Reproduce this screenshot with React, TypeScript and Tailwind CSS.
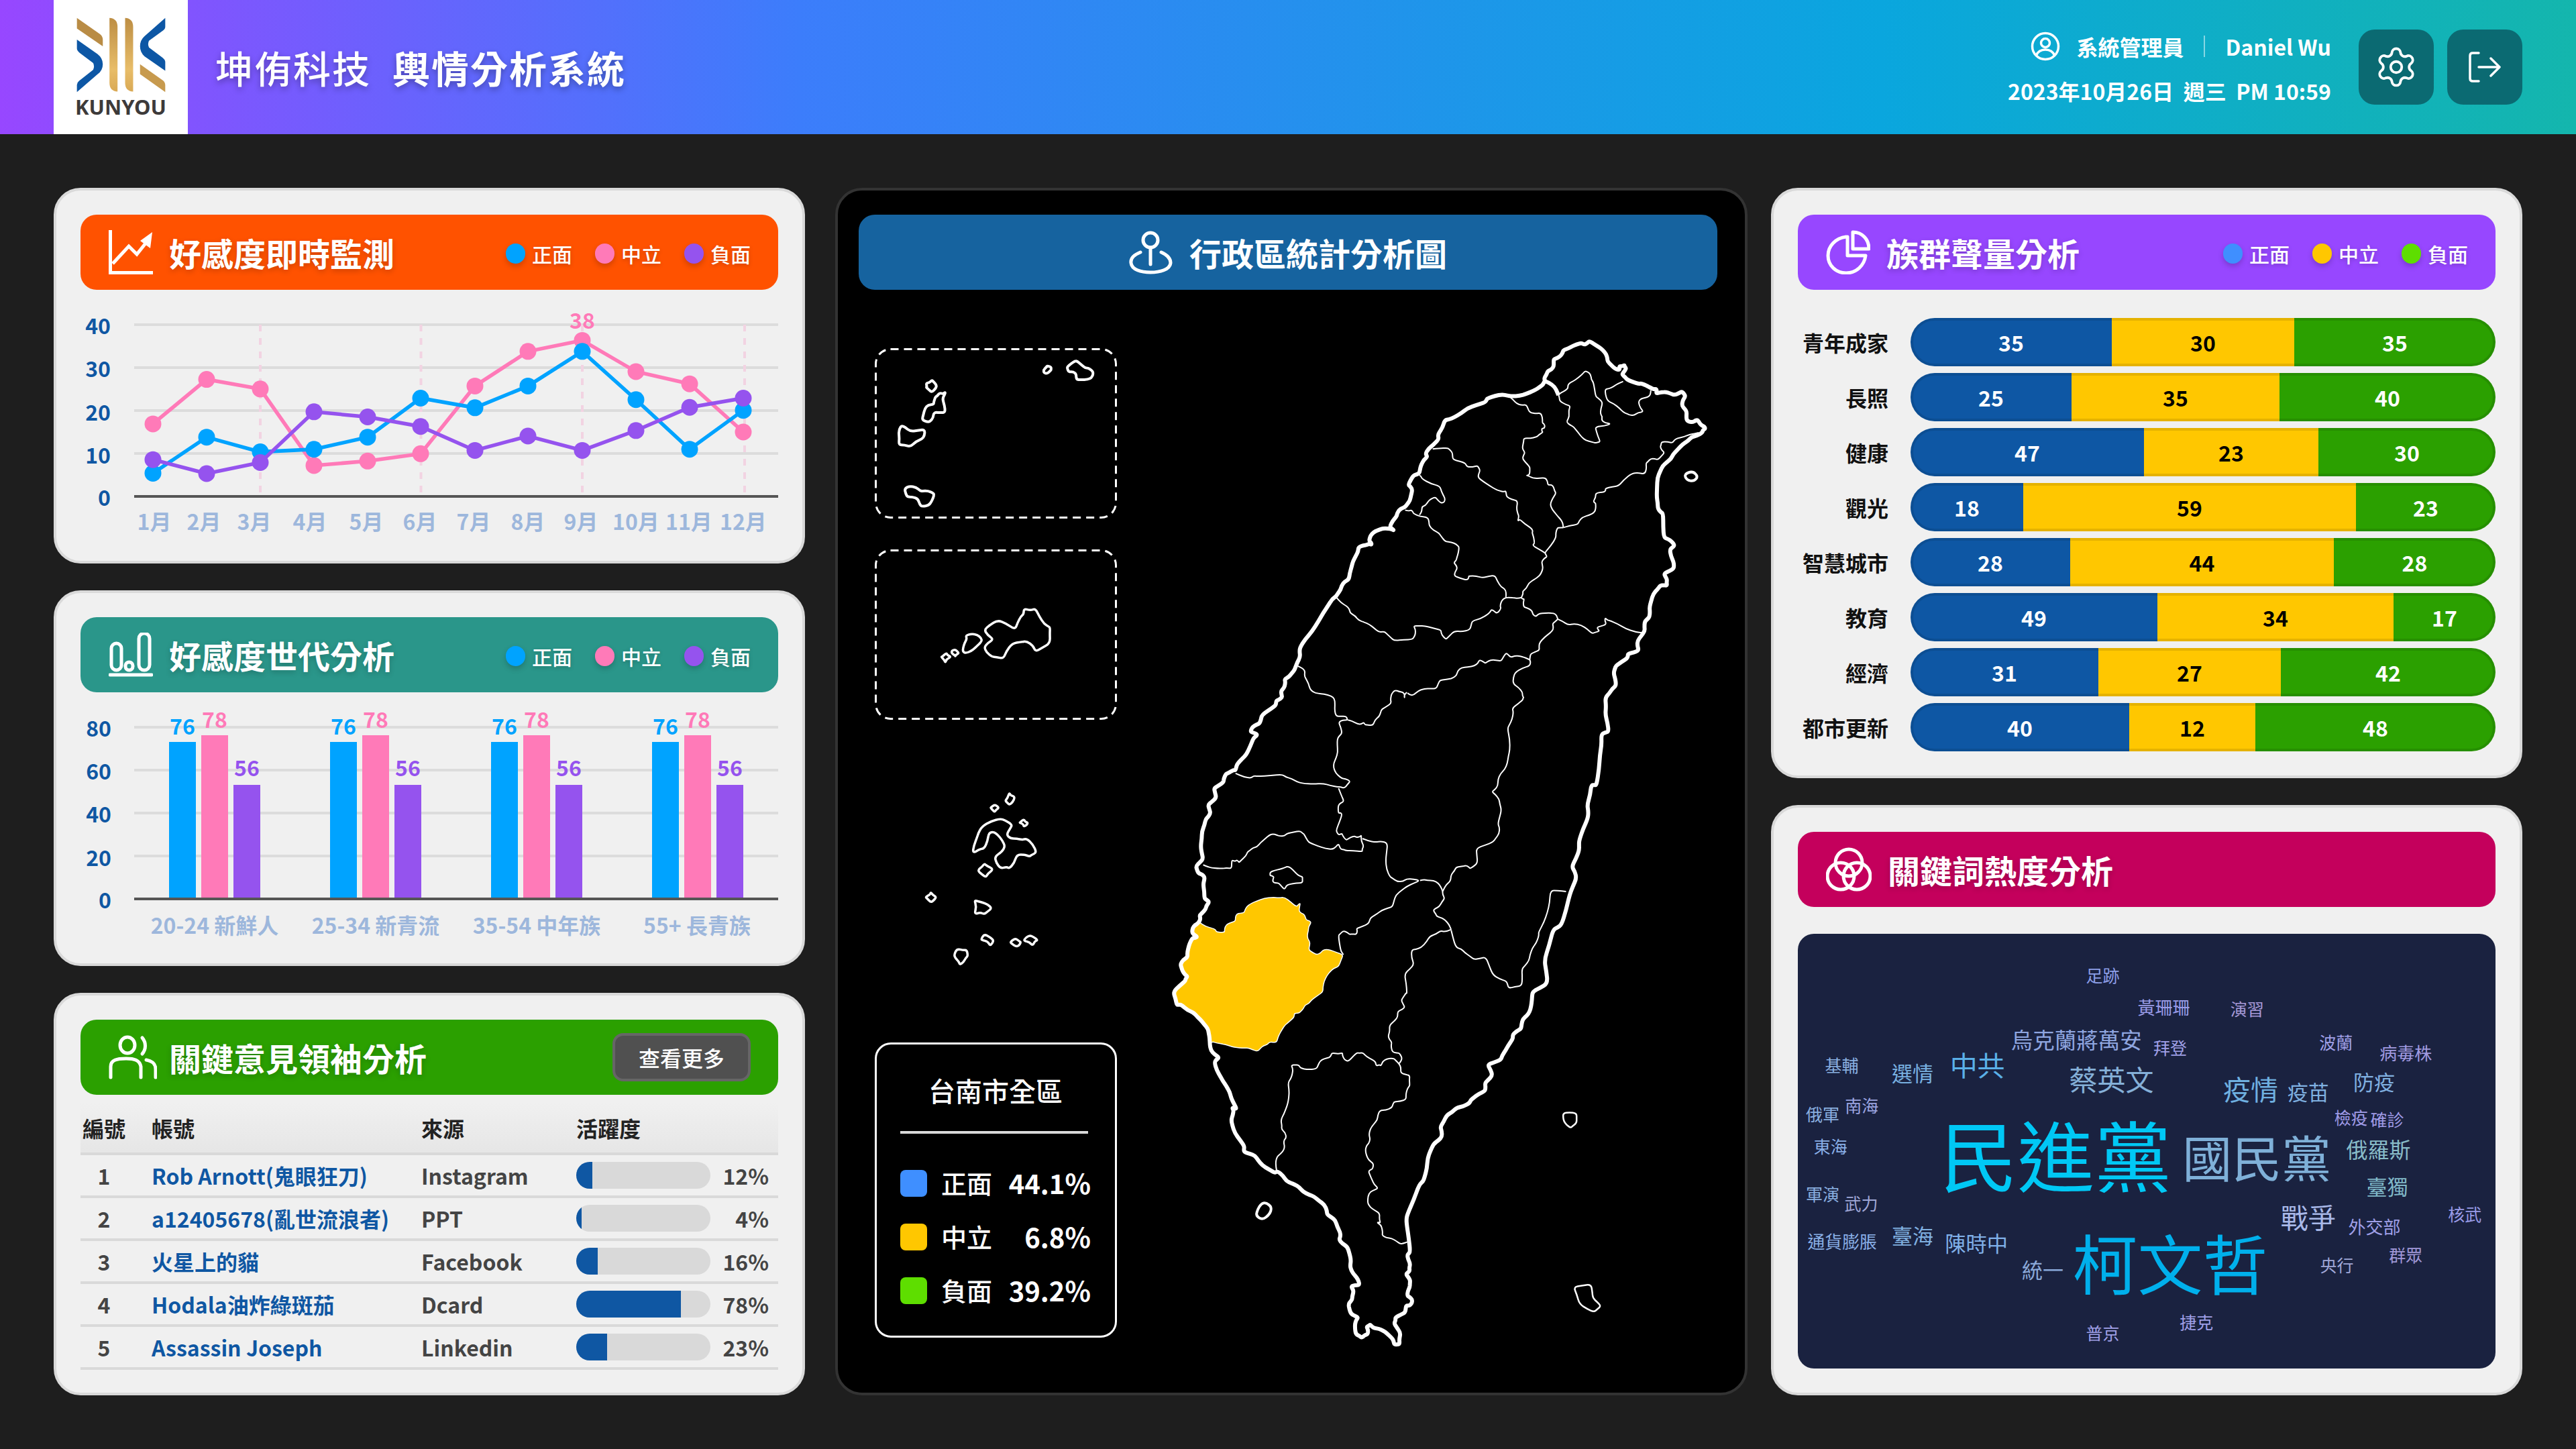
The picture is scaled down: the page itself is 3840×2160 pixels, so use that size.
import { Settings } from "lucide-react";
import type { ReactNode } from "react";

type Pts = number[][];

// map outlines are traced against the reference, so each block keeps its own origin and scale
const toPage = (ox: number, oy: number, sx: number, sy: number, pts: Pts): Pts =>
  pts.map(([x, y]) => [ox + x / sx, oy + y / sy]);
const z5 = (pts: Pts) => toPage(1240, 270, 1.153, 1.742, pts);
const z6 = (pts: Pts) => toPage(1240, 1170, 1.153, 1.686, pts);
const z9 = (pts: Pts) => toPage(2000, 480, 2.8, 2.8, pts);
const z10 = (pts: Pts) => toPage(1740, 1000, 2.8, 2.8, pts);
const z11 = (pts: Pts) => toPage(1780, 1480, 2.8, 2.8, pts);

// the real borders are ragged, so subdivide and nudge points by a hash of their position
function rough(p: Pts, amp: number, closed = false): Pts {
  const out: Pts = [];
  const nudge = (x: number, y: number) => {
    const h = Math.sin(x * 12.9898 + y * 78.233) * 43758.5453;
    const k = Math.sin(x * 39.346 + y * 11.135) * 24634.6345;
    return [x + (h - Math.floor(h) - 0.5) * amp * 2, y + (k - Math.floor(k) - 0.5) * amp * 2];
  };
  const n = closed ? p.length : p.length - 1;
  for (let i = 0; i < n; i++) {
    const a = p[i];
    const b = p[(i + 1) % p.length];
    out.push(a, nudge((a[0] + b[0]) / 2, (a[1] + b[1]) / 2));
  }
  if (!closed) out.push(p[p.length - 1]);
  return out;
}

function smooth(p: Pts, closed = false) {
  const mid = (a: number[], b: number[]) => [(a[0] + b[0]) / 2, (a[1] + b[1]) / 2];
  const f = (n: number) => n.toFixed(1);
  if (closed) {
    const s = mid(p[p.length - 1], p[0]);
    let d = `M${f(s[0])} ${f(s[1])}`;
    p.forEach((pt, i) => {
      const m = mid(pt, p[(i + 1) % p.length]);
      d += `Q${f(pt[0])} ${f(pt[1])} ${f(m[0])} ${f(m[1])}`;
    });
    return d + "Z";
  }
  let d = `M${f(p[0][0])} ${f(p[0][1])}`;
  for (let i = 1; i < p.length - 1; i++) {
    const m = mid(p[i], p[i + 1]);
    d += `Q${f(p[i][0])} ${f(p[i][1])} ${f(m[0])} ${f(m[1])}`;
  }
  const l = p[p.length - 1];
  return d + `L${f(l[0])} ${f(l[1])}`;
}

const coastWestLow: Pts = [[112,1428],[60,1395],[40,1395],[25,1340],[75,1295],[85,1275],[65,1255],[55,1225],[85,1195],[90,1150],[105,1115],[125,1110],[105,1095],[110,1065],[135,1045]];
const coast: Pts = [
  ...z5([[805,1235],[805,1210],[825,1170],[845,1120],[860,1085],[870,1070]]),
  ...z9([[0,1100],[30,1075],[42,1020],[60,975],[70,940],[105,930],[125,930],[115,915],[125,885],[155,868],[195,862],[218,870],[200,855],[230,810],[240,785],[265,772],[285,745],[295,700],[278,680],[300,640],[325,630],[335,590],[355,565],[350,550],[380,515],[405,490],[405,465],[430,410],[470,398],[525,360],[600,335],[610,318],[670,302],[710,310],[770,300],[830,270],[845,250],[845,235],[860,205],[885,185],[885,155],[915,140],[925,118],[965,100],[1000,88],[1020,92],[1035,80],[1075,105],[1105,135],[1110,165],[1135,190],[1160,200],[1160,185],[1180,180],[1188,195],[1170,220],[1190,240],[1240,258],[1265,262],[1290,275],[1315,280],[1315,298],[1355,292],[1390,305],[1420,290],[1435,310],[1420,350],[1440,375],[1440,410],[1465,418],[1485,408],[1500,430],[1518,445],[1505,462],[1460,480],[1430,505],[1395,540],[1375,570],[1340,600],[1318,650],[1315,730],[1320,780],[1342,800],[1345,900],[1375,915],[1388,935],[1370,950],[1385,1000],[1385,1030],[1345,1050],[1358,1075],[1358,1100],[1330,1100],[1300,1135],[1285,1190],[1285,1230],[1265,1250],[1265,1290],[1235,1330],[1240,1370],[1195,1385],[1190,1405],[1145,1435],[1135,1465],[1145,1510],[1130,1530],[1100,1568]]),
  [2393,1065],[2398,1091],[2387,1095],[2385,1125],[2380,1170],[2372,1170],[2366,1200],[2367,1220],[2354,1253],[2354,1268],[2343,1292],[2350,1309],[2340,1333],[2328,1378],[2315,1386],[2302,1431],[2307,1466],
  ...z11([[1414,-6],[1410,30],[1400,80],[1372,110],[1365,150],[1330,175],[1325,200],[1300,240],[1280,280],[1225,300],[1245,345],[1215,375],[1215,410],[1165,440],[1150,460],[1095,480],[1055,510],[1028,560],[1035,600],[1000,630],[975,690],[962,770],[940,800],[890,925],[888,970],[902,1080],[890,1095],[902,1130],[900,1160],[885,1175],[902,1200],[900,1230],[890,1265],[910,1280],[905,1300],[885,1305],[880,1335],[840,1355],[835,1380],[862,1420],[858,1465],[835,1468],[825,1440],[790,1410],[755,1400],[735,1385],[720,1395],[725,1425],[700,1440],[675,1425],[672,1380],[685,1355],[655,1340],[645,1300],[660,1280],[665,1250],[655,1225],[690,1220],[680,1190],[655,1155],[655,1115],[640,1060],[605,1030],[610,1000],[590,950],[555,925],[545,885],[500,850],[455,830],[420,800],[385,785],[350,745],[335,750],[285,720],[255,680],[210,665],[210,640],[170,585],[155,530],[165,490],[160,480],[178,485],[155,440],[135,390],[110,350],[85,290],[105,270],[70,240],[65,190],[58,150],[25,110]]),
  ...z10([...coastWestLow,[135,1020],[160,995],[175,965],[155,950],[150,890],[155,860],[130,845],[120,815],[150,785],[140,730],[145,670],[160,620],[180,595],[170,560],[205,530],[195,490],[235,465],[245,430],[265,420],[285,415],[295,385],[330,350],[360,280],[375,265],[350,255],[355,235],[385,220],[395,185],[445,150],[455,125],[480,110],[475,85],[490,65],[490,35],[520,10],[535,-15]]),
];

const tainan: Pts = [
  ...z10([[135,1050],[190,1075],[205,1090],[240,1090],[245,1060],[285,1045],[290,1015],[320,1010],[330,985],[375,960],[440,945],[490,945],[540,985],[555,970],[550,1000],[570,1015],[580,1040],[600,1050],[590,1070],[585,1100],[595,1130],[590,1165],[625,1185],[650,1165],[680,1165],[735,1185],[715,1235],[680,1255],[655,1295],[650,1340],[600,1375],[575,1395],[555,1425],[530,1430],[525,1450],[490,1480]]),
  ...z11([[355,175],[345,205],[315,205],[290,220],[265,245],[225,230],[190,230],[150,222],[110,212],[80,205],[65,210],[65,190],[58,150],[25,110]]),
  ...z10(coastWestLow),
];

const inner: Pts[] = [
  z9([[705,315],[730,340],[770,345],[785,378],[830,380],[838,420],[848,430],[835,445],[840,460],[815,480],[760,485],[755,520],[765,545],[755,570],[785,605],[785,630],[770,640],[800,652],[850,650],[860,680],[885,690],[895,715],[870,760],[885,790],[915,825],[925,858]]),
  z9([[380,530],[440,525],[462,545],[465,575],[515,590],[525,605],[565,600],[578,620],[570,650],[620,685],[660,705],[685,705],[690,730],[735,745],[735,800],[735,830],[745,825],[790,860],[795,880],[805,925],[800,935],[850,965]]),
  z9([[325,640],[335,655],[410,685],[425,725],[430,750],[410,752],[390,730],[360,750],[335,770],[325,805]]),
  z9([[265,785],[290,785],[300,800],[360,815],[365,850],[405,880],[430,915],[470,922],[490,940],[480,985],[468,1005],[482,1030],[470,1060],[525,1078],[530,1060],[590,1068],[640,1058],[665,1105],[685,1120],[685,1150]]),
  z9([[925,858],[985,845],[1005,815],[1055,795],[1060,760],[1050,750],[1060,715],[1095,710],[1100,695],[1155,685],[1210,632],[1265,635],[1270,590],[1290,570],[1320,575],[1348,545],[1330,520],[1335,500],[1380,505],[1400,485],[1455,468],[1490,462]]),
  z9([[925,858],[900,860],[895,900],[850,960],[858,980],[835,1000],[840,1030],[825,1060],[780,1090],[755,1125],[750,1150]]),
  z9([[750,1150],[720,1152],[685,1150],[665,1170],[665,1195],[645,1215],[625,1200],[610,1220],[545,1248],[535,1285],[470,1290],[440,1320],[425,1315],[415,1285],[345,1268],[300,1268],[308,1300],[295,1325],[220,1330],[185,1298],[155,1295],[115,1262],[70,1245],[35,1215],[20,1185],[-22,1150]]),
  z9([[750,1150],[762,1155],[760,1190],[795,1205],[810,1230],[835,1215],[885,1215],[902,1240]]),
  z9([[902,1240],[945,1265],[1000,1265],[1045,1300],[1075,1290],[1065,1275],[1105,1262],[1100,1235],[1115,1245],[1185,1280],[1260,1298]]),
  z9([[902,1240],[880,1260],[880,1290],[825,1340],[825,1370],[790,1385],[785,1410]]),
  z9([[785,1410],[745,1395],[705,1400],[685,1382],[665,1415],[630,1410],[600,1425],[575,1410],[555,1435],[500,1442],[480,1475],[450,1490],[410,1495],[395,1530],[345,1530],[300,1558],[275,1548]]),
  z10([[1000,90],[990,115],[985,90],[950,80],[935,100],[935,135],[895,160],[885,190],[860,225],[830,225],[820,215],[795,222],[750,205],[745,190],[705,190],[700,135],[685,105],[630,95],[595,75],[580,35],[575,0],[545,-20]]),
  z10([[750,205],[715,215],[730,260],[710,285],[712,340],[695,385],[700,420],[730,450],[765,460],[740,490],[710,485],[650,470],[565,470],[520,450],[480,432],[380,440],[350,448],[285,428]]),
  z10([[715,490],[738,545],[715,560],[715,595],[730,600],[705,665],[715,685],[730,680],[745,705],[765,695],[790,695],[810,685],[820,730],[815,755],[745,750],[725,745],[715,722],[690,745],[625,730],[590,715],[570,680],[555,668],[500,678],[470,690],[440,680],[410,700],[375,735],[345,750],[330,770],[300,800],[290,790],[270,790],[268,825],[230,825],[185,822],[150,810]]),
  z10([[815,700],[870,715],[920,718],[912,790],[930,860],[960,880],[1000,868],[1055,875],[1000,900],[955,935],[940,985],[895,1000],[850,1030],[840,1055],[790,1075],[790,1100],[760,1100],[735,1085],[715,1105],[725,1170],[735,1185]]),
  [...z10([[1055,875],[1085,875],[1130,885],[1150,920],[1158,950],[1135,985],[1110,1000],[1125,1025],[1160,1040],[1185,1080],[1180,1082],[1140,1085],[1095,1108],[1060,1155],[1020,1165],[1030,1225],[990,1265],[1000,1340]]), ...z11([[885,0],[865,30],[880,60],[855,75],[850,100],[815,135],[810,180],[825,205],[825,240],[855,250],[868,275],[855,295]])],
  z11([[345,745],[345,685],[375,655],[375,630],[385,605],[365,570],[362,530],[385,480],[395,440],[392,375],[410,340],[405,302],[435,302],[445,315],[510,318],[525,285],[565,270],[575,250],[620,250],[625,275],[645,285],[680,250],[705,250],[745,280],[760,305],[780,305],[805,275],[835,275],[855,295],[862,335],[900,345],[900,385],[890,400],[885,445],[835,455],[825,480],[775,490],[765,530],[735,568],[735,610],[718,640],[720,680],[745,710],[745,735],[728,745],[745,785],[768,815],[735,830],[725,870],[735,895],[775,920],[778,960],[765,960],[785,985],[785,1012],[825,1025],[860,1048],[890,1040]]),
  [...z10([[1185,1082],[1205,1155],[1240,1175],[1280,1205],[1330,1195],[1360,1270],[1415,1295],[1425,1325],[1480,1315],[1480,1245],[1510,1210],[1525,1155],[1550,1110]]), ...z6([[1215,370],[1230,320],[1235,265],[1262,268]])],
  [...z10([[1150,920],[1180,880],[1185,850],[1205,820],[1250,812],[1265,825],[1295,800],[1290,740],[1360,715],[1385,680],[1380,640],[1395,580],[1385,535],[1355,505],[1380,480],[1390,430],[1420,385],[1430,330],[1420,240],[1440,200],[1440,155],[1485,120]]), ...z9([[760,1568],[755,1545],[715,1510],[725,1462],[785,1435],[785,1410]])],
  z9([[1175,248],[1135,270],[1100,280],[1110,330],[1160,360],[1195,385],[1220,390],[1260,375],[1240,340],[1250,320],[1285,310],[1290,285]]),
];
const taipei = z9([[905,305],[910,330],[955,350],[950,395],[940,420],[965,435],[990,465],[1020,495],[1060,505],[1080,500],[1060,445],[1070,435],[1125,425],[1085,410],[1080,385],[1090,335],[1060,310],[1050,250],[1040,220],[1015,205],[985,235],[950,255],[945,275],[915,295]]);
const river = z9([[845,245],[885,260],[905,305]]);
const guishan = z9([[1430,635],[1465,622],[1488,645],[1470,665],[1440,660]]);
const lake = z10([[430,840],[470,828],[505,815],[540,848],[565,860],[565,885],[510,890],[490,912],[465,885],[440,880],[445,860],[430,855]]);
const liuqiu = z11([[300,875],[325,895],[315,925],[285,948],[258,930],[265,905],[280,880]]);
const greenIsland = z6([[1257,825],[1280,825],[1280,850],[1270,862],[1258,845]]);
const lanyu = z6([[1275,1262],[1305,1255],[1308,1290],[1322,1310],[1310,1325],[1285,1305]]);

const matsu: Pts[] = [
  [[162,525],[172,517],[180,530],[172,548],[162,535]],
  [[185,550],[195,548],[190,565],[195,600],[175,600],[168,625],[155,620],[160,590],[175,580],[178,560]],
  [[120,635],[135,650],[160,645],[155,670],[135,690],[115,685],[115,655]],
  [[370,480],[377,490],[370,500],[364,490]],
  [[410,475],[422,468],[435,485],[450,495],[440,515],[420,515],[415,495],[405,488]],
  [[125,798],[145,795],[155,805],[175,810],[172,830],[155,845],[148,825],[130,820]],
];
const kinmen: Pts[] = [
  [[330,1110],[350,1110],[365,1150],[375,1160],[375,1200],[350,1222],[335,1195],[310,1200],[295,1240],[275,1235],[262,1210],[278,1190],[262,1165],[285,1140],[315,1165],[325,1130]],
  [[230,1180],[250,1178],[258,1195],[240,1220],[225,1222],[228,1200]],
  [[188,1235],[197,1225],[205,1235],[195,1250]],
  [[212,1216],[218,1226],[212,1234],[206,1226]],
];
const penghu: Pts[] = [
  [[258,105],[290,85],[310,100],[300,125],[318,135],[335,135],[352,170],[340,180],[318,175],[305,210],[290,210],[280,180],[298,155],[285,125],[270,120],[262,160],[242,172],[250,130]],
  [[305,20],[315,30],[305,50],[298,40]],
  [[280,50],[287,58],[280,68],[273,58]],
  [[330,86],[337,95],[330,105],[323,95]],
  [[262,198],[278,212],[265,232],[250,215]],
  [[170,270],[180,282],[170,295],[161,282]],
  [[245,290],[258,295],[275,310],[262,325],[245,325]],
  [[262,375],[278,390],[272,404],[258,390]],
  [[316,386],[325,396],[316,406],[307,396]],
  [[340,378],[354,390],[345,404],[330,392]],
  [[215,412],[232,415],[230,435],[220,452],[212,435]],
];

const months = ["1月","2月","3月","4月","5月","6月","7月","8月","9月","10月","11月","12月"];
const monthX = [230,304,379,462,546,626,706,787,866,948,1027,1108];
const pointX = [228,308,388,468,548,627,708,787,868,948,1028,1108];
const blueLine = [1286,1188,1228,1221,1188,1082,1108,1049,955,1086,1221,1115];
const pinkLine = [1152,1031,1057,1265,1253,1233,1049,955,925,1010,1043,1174];
const purpleLine = [1249,1287,1257,1119,1133,1159,1224,1185,1224,1170,1107,1082];

const ageGroups = ["20-24 新鮮人","25-34 新青流","35-54 中年族","55+ 長青族"];

const leaders = [
  { id: 1, name: "Rob Arnott(鬼眼狂刀)", source: "Instagram", pct: 12 },
  { id: 2, name: "a12405678(亂世流浪者)", source: "PPT", pct: 4 },
  { id: 3, name: "火星上的貓", source: "Facebook", pct: 16 },
  { id: 4, name: "Hodala油炸綠斑茄", source: "Dcard", pct: 78 },
  { id: 5, name: "Assassin Joseph", source: "Linkedin", pct: 23 },
];

const groups = [
  { label: "青年成家", vals: [35,30,35], w: [300,272,300] },
  { label: "長照", vals: [25,35,40], w: [240,310,322] },
  { label: "健康", vals: [47,23,30], w: [348,260,264] },
  { label: "觀光", vals: [18,59,23], w: [168,496,208] },
  { label: "智慧城市", vals: [28,44,28], w: [238,393,241] },
  { label: "教育", vals: [49,34,17], w: [368,352,152] },
  { label: "經濟", vals: [31,27,42], w: [280,272,320] },
  { label: "都市更新", vals: [40,12,48], w: [326,188,358] },
];

// [text, center x, center y, font size, colour], positions as measured from the reference crop
const words: [string, number, number, number, string][] = [
  ["足跡",680,458,25,"#8d9fe8"],["黃珊珊",805,541,26,"#9a9ce8"],["演習",976,546,25,"#a79ad8"],
  ["烏克蘭蔣萬安",626,625,32.5,"#8fa6e0"],["拜登",818,647,25,"#a0a0e8"],["波蘭",1158,632,25,"#a0a0e8"],
  ["病毒株",1301,660,26,"#a09ae0"],["基輔",145,692,25,"#8ab0e0"],["選情",290,710,31,"#78b0e0"],
  ["中共",423,690,41,"#5ab0e8"],["蔡英文",698,728,42,"#85b0d8"],["疫情",983,752,41,"#6fb0e0"],
  ["疫苗",1101,760,31,"#7fb0e0"],["防疫",1236,733,31,"#80b0e0"],["南海",186,796,25,"#9aa4e0"],
  ["俄軍",106,818,25,"#8ab0e0"],["檢疫",1189,828,25,"#a09ce8"],["確診",1263,833,25,"#a09ce8"],
  ["東海",122,902,25,"#8ab0e8"],["民進黨",584,920,115,"#00c8f5"],["國民黨",996,928,74,"#7fb0d8"],
  ["俄羅斯",1245,910,32,"#88bcc8"],["臺獨",1263,1006,31,"#80b8c8"],["軍演",106,1026,25,"#8ab0e0"],
  ["武力",185,1050,25,"#a0a8d8"],["戰爭",1101,1086,41,"#a8b8e8"],["外交部",1237,1112,26,"#a0a0e8"],
  ["核武",1422,1078,25,"#9a9ce8"],["臺海",290,1132,31,"#80b0e0"],["通貨膨脹",146,1150,25.8,"#8ab0e8"],
  ["陳時中",421,1155,31.3,"#80b0e8"],["統一",557,1222,31,"#8aa8d8"],["柯文哲",818,1200,97,"#00b0ec"],
  ["央行",1160,1210,25,"#a0a8d8"],["群眾",1301,1184,25,"#a098d8"],["捷克",872,1358,25,"#a0a0e8"],
  ["普京",680,1387,25,"#a0a0e8"],
];

function Legend({ colors }: { colors: string[] }) {
  const names = ["正面", "中立", "負面"];
  return (
    <div className="mt-[3px] flex items-center gap-[34px]">
      {names.map((n, i) => (
        <div key={n} className="flex items-center gap-[10px]">
          <span
            className="h-[30px] w-[29px] rounded-full shadow-[0_4px_8px_rgba(0,0,0,0.2)]"
            style={{ backgroundColor: colors[i] }}
          />
          <span className="text-[30px] font-medium leading-none text-white [text-shadow:0_2px_6px_rgba(0,0,0,0.2)]">{n}</span>
        </div>
      ))}
    </div>
  );
}

function PanelHead({ color, icon, title, children }: { color: string; icon: ReactNode; title: string; children?: ReactNode }) {
  return (
    <div
      className="flex h-[112px] shrink-0 items-center justify-between rounded-[24px] pl-[42px] pr-[41px]"
      style={{ backgroundColor: color }}
    >
      <div className="flex items-center gap-[24px]">
        {icon}
        <span className="text-[48px] font-bold leading-none text-white [text-shadow:0_3px_8px_rgba(0,0,0,0.2)]">{title}</span>
      </div>
      {children}
    </div>
  );
}

const cardClass = "flex flex-col rounded-[40px] border-4 border-[#d9d9d9] bg-[#f0f0f0] p-[36px]";

function LineChartIcon() {
  return (
    <svg width="66" height="66" viewBox="0 0 66 66" fill="none" stroke="white">
      <path d="M2.5 0V63.5H66" strokeWidth="5" />
      <path d="M6 50L30 24L42 36L58 16" strokeWidth="5" />
      <path d="M65 3L47 16L62 27Z" fill="white" stroke="none" />
    </svg>
  );
}

function BarsIcon() {
  return (
    <svg width="66" height="66" viewBox="0 0 66 66" fill="none" stroke="white" strokeWidth="5">
      <rect x="4" y="16" width="15" height="40" rx="7.5" />
      <rect x="25" y="44" width="11" height="12" rx="5.5" />
      <rect x="45" y="1" width="16" height="55" rx="8" />
      <path d="M2 63H64" strokeLinecap="round" />
    </svg>
  );
}

function PeopleIcon() {
  return (
    <svg width="72" height="68" viewBox="0 0 72 68" fill="none" stroke="white" strokeWidth="5" strokeLinecap="round" className="-mr-[6px]">
      <ellipse cx="28" cy="16" rx="11" ry="12" />
      <path d="M50 5C56 12 56 22 50 29" />
      <path d="M3 64V48C3 38 12 36 26 36C38 36 46 38 48 48V64" />
      <path d="M56 38C66 40 70 44 70 52V64" />
    </svg>
  );
}

function PinIcon() {
  return (
    <svg width="65" height="65" viewBox="0 0 65 65" fill="none" stroke="white" strokeWidth="5" strokeLinecap="round">
      <circle cx="32" cy="14" r="11" />
      <path d="M32 25V50" />
      <path d="M17 32C7 36 2 41 3 48C4 58 18 62 32 62C46 62 61 58 62 48C62 41 57 36 48 32" />
    </svg>
  );
}

function PieIcon() {
  return (
    <svg width="66" height="66" viewBox="0 0 66 66" fill="none" stroke="white" strokeWidth="5" strokeLinejoin="round" strokeLinecap="round">
      <path d="M30 10C14 12 3 24 3 38C3 53 15 64 30 64C45 64 57 53 59 38H32V10" />
      <path d="M40 3V28H64C64 14 54 3 40 3Z" />
    </svg>
  );
}

function RingsIcon() {
  return (
    <svg width="68" height="66" viewBox="0 0 68 66" fill="none" stroke="white" strokeWidth="5">
      <circle cx="34" cy="23" r="20" />
      <circle cx="22" cy="43" r="20" />
      <circle cx="46" cy="43" r="20" />
    </svg>
  );
}

function Logo() {
  return (
    <div className="flex h-[200px] w-[200px] shrink-0 flex-col items-center bg-white pt-[26px]">
      <svg width="133" height="112" viewBox="100 76 400 336">
        <defs>
          <linearGradient id="gold" x1="0" y1="0" x2="0" y2="1">
            <stop offset="0" stopColor="#bd8e44" />
            <stop offset="0.7" stopColor="#e8bd69" />
            <stop offset="1" stopColor="#d9a955" />
          </linearGradient>
        </defs>
        <path d="M102 78L205 150Q218 160 218 175V205L102 125Z" fill="#b98c45" />
        <path d="M102 175L195 240Q218 258 218 285Q218 312 195 330L102 410V378Q102 368 112 360L175 310Q182 295 175 280L115 235Q102 225 102 215Z" fill="#0d57a5" />
        <path d="M248 78Q284 80 284 118V408Q248 406 248 368Z" fill="url(#gold)" />
        <path d="M318 78Q354 80 354 118V408Q318 406 318 368Z" fill="url(#gold)" />
        <path d="M498 78V118Q498 128 488 134L425 180Q418 195 425 210L485 255Q498 265 498 275V315L405 250Q385 232 385 205Q385 178 405 160Z" fill="#0d57a5" />
        <path d="M385 285L488 358Q498 366 498 380V410L385 330Z" fill="#c79a4e" />
      </svg>
      <span className="mt-[3px] font-['Noto_Sans',sans-serif] text-[31px] font-bold leading-[36px] text-[#3d3a3a]">KUNYOU</span>
    </div>
  );
}

function TopBar() {
  return (
    <header className="flex h-[200px] shrink-0 items-center bg-[linear-gradient(90deg,#9747ff_0%,#3c7dfb_31%,#0aa6de_73%,#14b6ad_100%)] pl-[80px] pr-[80px]">
      <Logo />
      <h1 className="ml-[41px] flex items-center gap-[32px] text-[56px] font-medium leading-none tracking-[2px] text-white [text-shadow:0_4px_10px_rgba(0,0,0,0.3)]">
        <span>坤侑科技</span>
        <span className="font-bold">輿情分析系統</span>
      </h1>
      <div className="ml-auto flex flex-col items-end gap-[22px] pt-[3px] font-semibold text-white">
        <div className="flex h-[44px] items-center">
          <svg width="44" height="44" viewBox="0 0 44 44" fill="none" stroke="white" strokeWidth="3.5">
            <circle cx="22" cy="22" r="19.5" />
            <circle cx="22" cy="17" r="6.5" />
            <path d="M8 36C11 29 16 27 22 27C28 27 33 29 36 36" />
          </svg>
          <span className="ml-[24px] text-[32px] leading-none">系統管理員</span>
          <span className="mx-[30px] h-[32px] w-[2px] bg-white/50" />
          <span className="text-[32px] leading-none">Daniel Wu</span>
        </div>
        <div className="flex h-[44px] items-center text-[32px] leading-none">2023年10月26日&nbsp;&nbsp;週三&nbsp;&nbsp;PM 10:59</div>
      </div>
      <div className="ml-[41px] flex gap-[20px]">
        <button className="flex h-[112px] w-[112px] items-center justify-center rounded-[24px] bg-[#0b6a72] text-white">
          <Settings size={66} strokeWidth={1.4} />
        </button>
        <button className="flex h-[112px] w-[112px] items-center justify-center rounded-[24px] bg-[#0b6a72]">
          <svg width="48" height="46" viewBox="0 0 48 46" fill="none" stroke="white" strokeWidth="3.5" strokeLinecap="round" strokeLinejoin="round">
            <path d="M15 2H6Q2 2 2 6V40Q2 44 6 44H15" />
            <path d="M15 23H46M33 10L46 23L33 36" />
          </svg>
        </button>
      </div>
    </header>
  );
}

function Polyline({ ys, color }: { ys: number[]; color: string }) {
  const pts = ys.map((y, i) => [pointX[i], y / 1.823]);
  return (
    <g>
      <polyline points={pts.map((p) => p.join(",")).join(" ")} fill="none" stroke={color} strokeWidth="5.5" />
      {pts.map((p, i) => (
        <circle key={i} cx={p[0]} cy={p[1]} r="12.5" fill={color} />
      ))}
    </g>
  );
}

function AxisText({ x, y, color, anchor = "middle", children }: { x: number; y: number; color: string; anchor?: "middle" | "end"; children: ReactNode }) {
  return (
    <text x={x} y={y - 2} textAnchor={anchor} dominantBaseline="central" fontSize="32" fontWeight="600" fill={color}>
      {children}
    </text>
  );
}

function MoodChart() {
  const grid = [484, 548, 612, 676];
  const ticks: [string, number][] = [["40",486],["30",550],["20",615],["10",679],["0",742]];
  return (
    <svg viewBox="120 432 1040 368" className="h-[368px] w-[1040px] shrink-0 overflow-visible">
      {grid.map((y) => (
        <line key={y} x1="200" x2="1160" y1={y} y2={y} stroke="#dcdcdc" strokeWidth="4" />
      ))}
      {[388, 627.5, 868, 1110].map((x) => (
        <line key={x} x1={x} x2={x} y1="484" y2="740" stroke="#f2d3e2" strokeWidth="4" strokeDasharray="10 10" />
      ))}
      <line x1="200" x2="1160" y1="740" y2="740" stroke="#555" strokeWidth="4" />
      {ticks.map(([t, y]) => (
        <AxisText key={t} x={165} y={y} anchor="end" color="#0f57a3">{t}</AxisText>
      ))}
      {months.map((m, i) => (
        <AxisText key={m} x={monthX[i]} y={778} color="#9db7dc">{m}</AxisText>
      ))}
      <Polyline ys={pinkLine} color="#ff7ab8" />
      <Polyline ys={blueLine} color="#00a3ff" />
      <Polyline ys={purpleLine} color="#9553ee" />
      <AxisText x={868} y={478} color="#ff7ab8">38</AxisText>
    </svg>
  );
}

function AgeChart() {
  const grid = [1084, 1148, 1212, 1276];
  const ticks: [string, number][] = [["80",1086],["60",1150],["40",1214],["20",1279],["0",1342]];
  const starts = [252, 492, 732, 972];
  const groupX = [320, 560, 800, 1039];
  return (
    <svg viewBox="120 1032 1040 368" className="h-[368px] w-[1040px] shrink-0 overflow-visible">
      {grid.map((y) => (
        <line key={y} x1="200" x2="1160" y1={y} y2={y} stroke="#dcdcdc" strokeWidth="4" />
      ))}
      {ticks.map(([t, y]) => (
        <AxisText key={t} x={166} y={y} anchor="end" color="#0f57a3">{t}</AxisText>
      ))}
      {starts.map((x, i) => (
        <g key={x}>
          <rect x={x} y="1106" width="40" height="232" fill="#00a3ff" />
          <rect x={x + 48} y="1096" width="40" height="242" fill="#ff7ab8" />
          <rect x={x + 96} y="1170" width="40" height="168" fill="#9553ee" />
          <AxisText x={x + 20} y={1083} color="#00a3ff">76</AxisText>
          <AxisText x={x + 68} y={1073} color="#ff7ab8">78</AxisText>
          <AxisText x={x + 116} y={1145} color="#9553ee">56</AxisText>
          <AxisText x={groupX[i]} y={1380} color="#9db7dc">{ageGroups[i]}</AxisText>
        </g>
      ))}
      <line x1="200" x2="1160" y1="1340" y2="1340" stroke="#555" strokeWidth="4" />
    </svg>
  );
}

function LeaderTable() {
  const cols = "grid grid-cols-[106px_402px_231px_1fr] items-center border-b-4 border-[#d9d9d9]";
  return (
    <div className="mt-[12px] text-[32px] leading-none">
      <div className={`${cols} h-[78px] bg-gradient-to-b from-[#f0f0f0] to-[#e6e6e6] font-bold text-[#222]`}>
        <span className="pr-[36px] text-center">編號</span>
        <span>帳號</span>
        <span>來源</span>
        <span>活躍度</span>
      </div>
      {leaders.map((l) => (
        <div key={l.id} className={`${cols} h-[64px] font-semibold`}>
          <span className="pr-[36px] text-center text-[#444]">{l.id}</span>
          <span className="whitespace-nowrap text-[#0f57a3]">{l.name}</span>
          <span className="text-[#444]">{l.source}</span>
          <div className="flex items-center justify-between pr-[14px]">
            <div className="h-[40px] w-[200px] overflow-hidden rounded-full bg-[#d9d9d9]">
              <div className="h-full bg-[#0f57a3]" style={{ width: `${l.pct}%` }} />
            </div>
            <span className="text-[#444]">{l.pct}%</span>
          </div>
        </div>
      ))}
    </div>
  );
}

function StackedBars() {
  const fills = ["bg-[#0e57a4] text-white", "bg-[#ffc700] text-black", "bg-[#2ba000] text-white"];
  return (
    <div className="mt-[42px] flex flex-col gap-[10px]">
      {groups.map((g) => (
        <div key={g.label} className="flex items-center gap-[33px]">
          <span className="w-[135px] text-right text-[32px] font-bold leading-none text-[#111]">{g.label}</span>
          <div className="relative flex h-[72px] w-[872px] overflow-hidden rounded-full">
            {g.vals.map((v, i) => (
              <div
                key={i}
                className={`flex items-center justify-center text-[32px] font-semibold leading-none ${fills[i]}`}
                style={{ width: g.w[i] }}
              >
                {v}
              </div>
            ))}
            <div className="absolute inset-0 rounded-full border-4 border-black/10" />
          </div>
        </div>
      ))}
    </div>
  );
}

function WordCloud() {
  return (
    <div className="relative mt-[40px] h-[648px] overflow-hidden rounded-[24px] bg-[#1a2240]">
      {words.map(([t, x, y, s, c]) => (
        <span
          key={t}
          className="absolute -translate-x-1/2 -translate-y-1/2 whitespace-nowrap leading-none"
          style={{ left: x / 1.375 - 40, top: y / 1.742 + 1190 - 1392, fontSize: s, color: c }}
        >
          {t}
        </span>
      ))}
    </div>
  );
}

function IslandBox({ x, y, shapes, sw }: { x: number; y: number; shapes: Pts[]; sw: number }) {
  return (
    <svg viewBox={`${x} ${y} 361 254`} className="h-[254px] w-[361px] shrink-0" fill="none">
      <rect x={x + 1.5} y={y + 1.5} width="358" height="251" rx="22" stroke="white" strokeWidth="3" strokeDasharray="12 8" />
      {shapes.map((s, i) => (
        <path key={i} d={smooth(rough(z5(s), 3, true), true)} stroke="white" strokeWidth={sw} />
      ))}
    </svg>
  );
}

function TaiwanMap() {
  return (
    <svg viewBox="1665 432 895 1644" className="h-[1644px] w-[895px] shrink-0" fill="none" stroke="white" strokeLinejoin="round">
      <path d={smooth(rough(tainan, 1.5, true), true)} fill="#ffc700" stroke="white" strokeWidth="1.5" />
      {inner.map((p, i) => (
        <path key={i} d={smooth(rough(p, 2))} strokeWidth="2" />
      ))}
      <path d={smooth(rough(taipei, 2, true), true)} strokeWidth="2" />
      <path d={smooth(rough(lake, 1.5, true), true)} strokeWidth="2" />
      <path d={smooth(river)} strokeWidth="6" />
      <path d={smooth(rough(coast, 1.5, true), true)} strokeWidth="6" />
      <path d={smooth(guishan, true)} strokeWidth="4" />
      <path d={smooth(liuqiu, true)} strokeWidth="4" />
      <path d={smooth(rough(greenIsland, 1.5, true), true)} strokeWidth="2.5" />
      <path d={smooth(rough(lanyu, 1.5, true), true)} strokeWidth="2.5" />
    </svg>
  );
}

function MapPanel() {
  const rows = [
    { c: "bg-[#3f8fff]", n: "正面", v: "44.1%" },
    { c: "bg-[#ffc700]", n: "中立", v: "6.8%" },
    { c: "bg-[#5ede00]", n: "負面", v: "39.2%" },
  ];
  return (
    <section className="-mr-[5px] ml-[5px] flex flex-col rounded-[40px] border-4 border-[#333] bg-black pl-[31px] pr-[41px] pt-[36px]">
      <div className="flex h-[112px] shrink-0 items-center justify-center gap-[25px] rounded-[24px] bg-[#16639f]">
        <PinIcon />
        <span className="text-[48px] font-bold leading-none text-white">行政區統計分析圖</span>
      </div>
      <div className="flex">
        <div className="ml-[24px] flex w-[361px] shrink-0 flex-col pt-[87px]">
          <IslandBox x={1304} y={519} shapes={matsu} sw={4} />
          <div className="mt-[46px]">
            <IslandBox x={1304} y={819} shapes={kinmen} sw={3.5} />
          </div>
          <svg viewBox="1304 1073 361 481" className="h-[481px] w-[361px] shrink-0" fill="none" stroke="white" strokeWidth="3.5">
            {penghu.map((s, i) => (
              <path key={i} d={smooth(rough(z6(s), 3, true), true)} />
            ))}
          </svg>
          <div className="flex h-[440px] flex-col rounded-[24px] border-[3px] border-white pl-[35px] pr-[36px] font-medium text-white">
            <div className="mt-[45px] text-center text-[40px] leading-[46px]">台南市全區</div>
            <div className="mt-[38px] h-[4px] w-[280px] bg-[#d9d9d9]" />
            <div className="mt-[54px] flex flex-col gap-[40px]">
              {rows.map((r) => (
                <div key={r.n} className="flex h-[40px] items-center text-[38px] leading-none">
                  <span className={`h-[40px] w-[40px] rounded-[8px] ${r.c}`} />
                  <span className="ml-[21px] -translate-y-[1px]">{r.n}</span>
                  <span className="ml-auto -translate-y-[1px] text-[40px] font-semibold">{r.v}</span>
                </div>
              ))}
            </div>
          </div>
        </div>
        <TaiwanMap />
      </div>
    </section>
  );
}

export default function App() {
  const leftLegend = ["#00a3ff", "#ff7ab8", "#9553ee"];
  const rightLegend = ["#3f8fff", "#ffc700", "#5ede00"];
  return (
    <div className="flex h-[2160px] w-[3840px] flex-col overflow-hidden bg-[#1e1e1e] font-['Noto_Sans_CJK_TC',sans-serif]">
      <TopBar />
      <main className="grid flex-1 grid-cols-[1120px_1360px_1120px] gap-[40px] px-[80px] pb-[80px] pt-[80px]">
        <div className="flex flex-col gap-[40px]">
          <section className={`${cardClass} h-[560px]`}>
            <PanelHead color="#ff5200" icon={<LineChartIcon />} title="好感度即時監測">
              <Legend colors={leftLegend} />
            </PanelHead>
            <MoodChart />
          </section>
          <section className={`${cardClass} h-[560px]`}>
            <PanelHead color="#2a968a" icon={<BarsIcon />} title="好感度世代分析">
              <Legend colors={leftLegend} />
            </PanelHead>
            <AgeChart />
          </section>
          <section className={`${cardClass} h-[600px]`}>
            <PanelHead color="#2ba000" icon={<PeopleIcon />} title="關鍵意見領袖分析">
              <button className="h-[72px] w-[206px] rounded-[16px] border-4 border-[#666] bg-[#505050] text-[32px] font-medium leading-none text-white">
                查看更多
              </button>
            </PanelHead>
            <LeaderTable />
          </section>
        </div>
        <MapPanel />
        <div className="flex flex-col gap-[40px]">
          <section className={`${cardClass} h-[880px]`}>
            <PanelHead color="#9747ff" icon={<PieIcon />} title="族群聲量分析">
              <Legend colors={rightLegend} />
            </PanelHead>
            <StackedBars />
          </section>
          <section className={`${cardClass} flex-1`}>
            <PanelHead color="#c4005c" icon={<RingsIcon />} title="關鍵詞熱度分析" />
            <WordCloud />
          </section>
        </div>
      </main>
    </div>
  );
}
